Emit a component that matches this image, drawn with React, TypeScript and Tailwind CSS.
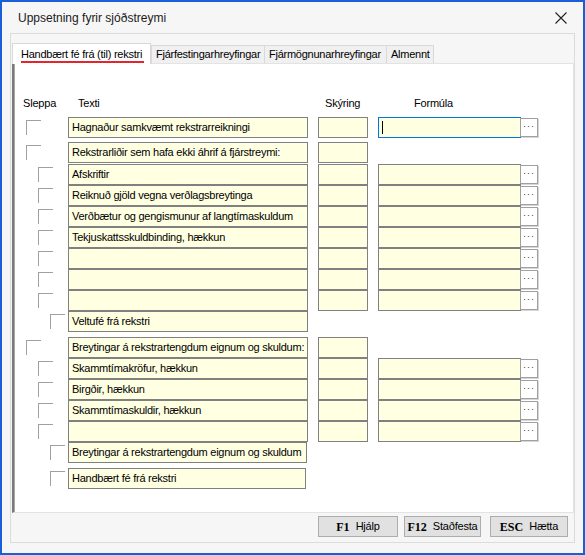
import React from "react";

type Row = {
  label: string;
  level: 0 | 1 | 2;
  skyring: boolean;
  formula: boolean;
  mt: string;
  w?: string;
  focused?: boolean;
};

const rows: Row[] = [
  { label: "Hagnaður samkvæmt rekstrarreikningi", level: 0, skyring: true, formula: true, mt: "mt-0", focused: true },
  { label: "Rekstrarliðir sem hafa ekki áhrif á fjárstreymi:", level: 0, skyring: true, formula: false, mt: "mt-[4px]" },
  { label: "Afskriftir", level: 1, skyring: true, formula: true, mt: "mt-[1px]" },
  { label: "Reiknuð gjöld vegna verðlagsbreytinga", level: 1, skyring: true, formula: true, mt: "mt-0" },
  { label: "Verðbætur og gengismunur af langtímaskuldum", level: 1, skyring: true, formula: true, mt: "mt-0" },
  { label: "Tekjuskattsskuldbinding, hækkun", level: 1, skyring: true, formula: true, mt: "mt-0" },
  { label: "", level: 1, skyring: true, formula: true, mt: "mt-0" },
  { label: "", level: 1, skyring: true, formula: true, mt: "mt-0" },
  { label: "", level: 1, skyring: true, formula: true, mt: "mt-0" },
  { label: "Veltufé frá rekstri", level: 2, skyring: false, formula: false, mt: "mt-0" },
  { label: "Breytingar á rekstrartengdum eignum og skuldum:", level: 0, skyring: true, formula: false, mt: "mt-[5px]" },
  { label: "Skammtímakröfur, hækkun", level: 1, skyring: true, formula: true, mt: "mt-0" },
  { label: "Birgðir, hækkun", level: 1, skyring: true, formula: true, mt: "mt-0" },
  { label: "Skammtímaskuldir, hækkun", level: 1, skyring: true, formula: true, mt: "mt-0" },
  { label: "", level: 1, skyring: true, formula: true, mt: "mt-0" },
  { label: "Breytingar á rekstrartengdum eignum og skuldum", level: 2, skyring: false, formula: false, mt: "mt-0", w: "w-[239px]" },
  { label: "Handbært fé frá rekstri", level: 2, skyring: false, formula: false, mt: "mt-[5px]", w: "w-[238px]" },
];

const indent = ["ml-[12px]", "ml-[24px]", "ml-[36px]"];

function Check({ level }: { level: number }) {
  return (
    <div className="w-[54px] shrink-0">
      <div className={`mt-[3px] h-[15px] w-[15px] border-l border-t border-[#a0a0a0] ${indent[level]}`} />
    </div>
  );
}

function FormRow({ row }: { row: Row }) {
  return (
    <div className={`flex h-[21px] items-start ${row.mt}`}>
      <Check level={row.level} />
      <div
        className={`flex h-[21px] ${row.w ?? "w-[240px]"} shrink-0 items-center overflow-hidden whitespace-nowrap border border-[#808080] bg-[#ffffe1] pl-[3px] text-[11px] tracking-[-0.25px] text-black`}
      >
        {row.label}
      </div>
      {row.skyring && <div className="ml-[10px] h-[21px] w-[50px] shrink-0 border border-[#808080] bg-[#ffffe1]" />}
      {row.formula && (
        <div className="ml-[10px] flex h-[21px] shrink-0 items-start">
          <div
            className={`flex h-[21px] w-[143px] items-center border bg-[#ffffe1] pl-[3px] ${
              row.focused ? "border-[#0078d7]" : "border-[#808080]"
            }`}
          >
            {row.focused && <div className="h-[13px] w-px bg-black" />}
          </div>
          <div className="-ml-px mt-px flex h-[19px] w-[18px] items-center justify-center border border-[#a0a0a0] bg-white pb-[3px] text-[9px] leading-none tracking-[1px] text-[#333] shadow-[1px_1px_0_#d6d6d6]">
            ···
          </div>
        </div>
      )}
    </div>
  );
}

function FooterButton({ keyName, label, w }: { keyName: string; label: string; w: string }) {
  return (
    <button
      type="button"
      className={`flex h-[21px] ${w} items-center justify-center gap-[6px] whitespace-nowrap border border-[#adadad] bg-[#e1e1e1] text-[11px] tracking-[-0.2px] text-black`}
    >
      <span className="font-['Liberation_Serif',serif] text-[12px] font-bold tracking-normal">{keyName}</span>
      <span>{label}</span>
    </button>
  );
}

export default function App() {
  return (
    <div className="h-[555px] w-[585px] border-2 border-[#1a5fd8] bg-[#f6f6f6] font-['Liberation_Sans',Arial,sans-serif] text-black">
      {/* title bar */}
      <div className="flex h-[31px] items-center justify-between pl-[16px] pr-[16px]">
        <span className="text-[12px] text-[#1a1a1a]">Uppsetning fyrir sjóðstreymi</span>
        <svg width="12" height="12" viewBox="0 0 12 12" className="mt-px">
          <path d="M0.5 0.5 L11.5 11.5 M11.5 0.5 L0.5 11.5" stroke="#222" strokeWidth="1.1" />
        </svg>
      </div>

      <div className="mx-[8px] flex h-[510px] flex-col border border-[#dcdcdc] pl-px pt-[9px]">
        {/* tabs */}
        <div className="flex h-[20px] items-end whitespace-nowrap text-[11px] tracking-[-0.25px]">
          <div className="relative z-10 -mb-px flex h-[21px] w-[139px] items-start border border-b-0 border-[#d9d9d9] bg-white pl-[8px] pt-[4px]">
            <span className="border-b-2 border-[#e3262b] pr-[2px] leading-[13px]">Handbært fé frá (til) rekstri</span>
          </div>
          <div className="flex h-[18px] w-[114px] items-center overflow-hidden border border-b-0 border-[#d9d9d9] bg-[#f0f0f0] pl-[4px]">
            Fjárfestingarhreyfingar
          </div>
          <div className="flex h-[18px] w-[122px] items-center overflow-hidden border border-b-0 border-l-0 border-[#d9d9d9] bg-[#f0f0f0] pl-[4px]">
            Fjármögnunarhreyfingar
          </div>
          <div className="flex h-[18px] w-[47px] items-center overflow-hidden border border-b-0 border-l-0 border-[#d9d9d9] bg-[#f0f0f0] pl-[4px]">
            Almennt
          </div>
        </div>

        {/* tab page */}
        <div className="h-[450px] border-b border-l-2 border-r border-t border-[#e3e3e3] border-l-[#7a7a7a] bg-white shadow-[inset_1px_0_0_#a8a8a8]">
          <div className="mt-[32px] flex h-[14px] items-center text-[11px] tracking-[-0.2px]">
            <span className="w-[64px] pl-[9px]">Sleppa</span>
            <span className="w-[247px]">Texti</span>
            <span className="w-[89px]">Skýring</span>
            <span>Formúla</span>
          </div>
          <div className="mt-[7px] flex flex-col">
            {rows.map((row, i) => (
              <FormRow key={i} row={row} />
            ))}
          </div>
        </div>

        {/* buttons */}
        <div className="mt-[3px] flex justify-end pr-[6px]">
          <FooterButton keyName="F1" label="Hjálp" w="w-[80px]" />
          <div className="w-[6px]" />
          <FooterButton keyName="F12" label="Staðfesta" w="w-[77px]" />
          <div className="w-[9px]" />
          <FooterButton keyName="ESC" label="Hætta" w="w-[78px]" />
        </div>
      </div>
    </div>
  );
}
